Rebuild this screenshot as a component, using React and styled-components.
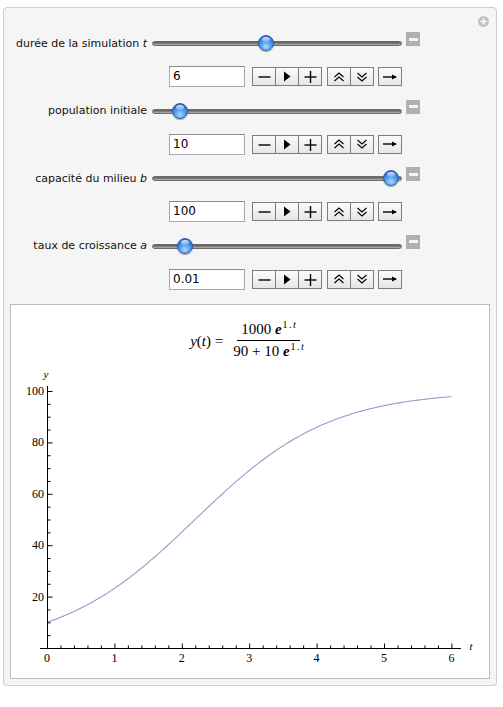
import React from "react";
import styled, { createGlobalStyle } from "styled-components";

const Global = createGlobalStyle`
  html, body { margin: 0; padding: 0; background: #fff; }
  body { font-family: "DejaVu Sans", "Liberation Sans", sans-serif; }
`;

const Panel = styled.div`
  position: relative;
  box-sizing: border-box;
  margin: 7px 0 0 3px;
  width: 494px;
  height: 679px;
  background: #f5f5f5;
  border: 1px solid #cfcfcf;
  border-radius: 4px;
  display: flex;
  flex-direction: column;
  box-shadow: 0 1px 1px rgba(0, 0, 0, 0.06);
`;

const AddButton = styled.div`
  position: absolute;
  top: 8px;
  right: 7px;
  width: 11px;
  height: 11px;
  border-radius: 50%;
  background: #c2c2c2;
  display: flex;
  align-items: center;
  justify-content: center;
`;

const Controls = styled.div`
  display: flex;
  flex-direction: column;
  padding-top: 18px;
`;

const SliderRow = styled.div`
  display: flex;
  align-items: center;
  height: 34px;
`;

const Label = styled.div`
  box-sizing: border-box;
  width: 148px;
  padding-right: 5px;
  text-align: right;
  font-size: 11px;
  color: #111;
  white-space: nowrap;

  i { font-style: italic; }
`;

const Track = styled.div`
  position: relative;
  width: 250px;
  height: 16px;

  &::before {
    content: "";
    position: absolute;
    left: 0;
    right: 0;
    top: 6px;
    height: 5px;
    box-sizing: border-box;
    border-radius: 3px;
    border: 1px solid #6c6c6c;
    background: linear-gradient(#555, #8a8a8a 60%, #b5b5b5);
  }
`;

const Thumb = styled.div`
  position: absolute;
  top: 0;
  width: 16px;
  height: 16px;
  margin-left: -8px;
  box-sizing: border-box;
  border-radius: 50%;
  border: 1px solid #2b5fb0;
  background: radial-gradient(circle at 50% 75%, #a9dcff 0%, #5fa6f2 35%, #2f74d6 70%, #1f56b6 100%);
  box-shadow: 0 1px 1px rgba(0, 0, 0, 0.35);

  &::after {
    content: "";
    position: absolute;
    left: 3px;
    top: 1px;
    width: 8px;
    height: 5px;
    border-radius: 50%;
    background: linear-gradient(rgba(255, 255, 255, 0.85), rgba(255, 255, 255, 0.15));
  }
`;

const Collapse = styled.div`
  align-self: flex-start;
  margin: 6px 0 0 4px;
  width: 14px;
  height: 14px;
  background: #b0b0b0;
  display: flex;
  align-items: center;
  justify-content: center;

  &::after {
    content: "";
    width: 9px;
    height: 3px;
    background: #f4f4f4;
  }
`;

const InputRow = styled.div`
  display: flex;
  align-items: center;
  height: 33.5px;
  padding-left: 165px;
`;

const Field = styled.div`
  box-sizing: border-box;
  width: 76px;
  height: 21px;
  background: #fff;
  border: 1px solid #a9a9a9;
  border-top-color: #8c8c8c;
  font-size: 12px;
  line-height: 19px;
  padding-left: 3px;
  color: #000;
`;

const Group = styled.div`
  display: flex;
  margin-left: ${(p) => p.$gap}px;
  border: 1px solid #7d7d7d;
  height: 19px;
  box-sizing: border-box;
`;

const Btn = styled.div`
  width: ${(p) => p.$w}px;
  height: 100%;
  display: flex;
  align-items: center;
  justify-content: center;
  background: linear-gradient(#fbfbfb, #e6e6e6);
  & + & { border-left: 1px solid #7d7d7d; }
`;

const Pane = styled.div`
  margin: 8px 6px 6px 6px;
  flex: 1;
  background: #fff;
  border: 1px solid #bdbdbd;
  display: flex;
  flex-direction: column;
`;

const Formula = styled.div`
  height: 60px;
  box-sizing: border-box;
  padding: 16px 2px 0 0;
  display: flex;
  justify-content: center;
  align-items: flex-start;
  font-family: "Liberation Serif", "DejaVu Serif", serif;
  font-size: 15px;
  color: #000;

  i { font-style: italic; }
`;

const Lhs = styled.div`
  margin-top: 12px;
  margin-right: 6px;
  white-space: nowrap;
`;

const Frac = styled.div`
  display: flex;
  flex-direction: column;
  align-items: center;
`;

const Num = styled.div`
  padding: 0 4px 2px;
  line-height: 17px;
  border-bottom: 1px solid #000;
  white-space: nowrap;
`;

const Den = styled.div`
  padding: 2px 4px 0;
  line-height: 17px;
  white-space: nowrap;
`;

const E = styled.b`
  font-style: italic;
  font-weight: bold;
`;

const Sup = styled.sup`
  font-size: 10px;
  vertical-align: 6px;
  line-height: 0;
  margin-left: 1px;
  word-spacing: -1px;
`;

const Chart = styled.svg`
  display: block;
  font-family: "Liberation Serif", "DejaVu Serif", serif;
`;

const params = [
  { label: "durée de la simulation", v: "t", value: "6", pos: 0.453 },
  { label: "population initiale", v: "", value: "10", pos: 0.085 },
  { label: "capacité du milieu", v: "b", value: "100", pos: 0.987 },
  { label: "taux de croissance", v: "a", value: "0.01", pos: 0.107 },
];

const Icon = ({ kind }) => {
  const s = { stroke: "#000", strokeWidth: 1.4, fill: "none" };
  if (kind === "minus") return <svg width="13" height="13"><line x1="0.5" y1="7" x2="12.5" y2="7" {...s} /></svg>;
  if (kind === "plus")
    return (
      <svg width="13" height="13">
        <line x1="0.5" y1="7" x2="12.5" y2="7" {...s} />
        <line x1="6.5" y1="1" x2="6.5" y2="13" {...s} />
      </svg>
    );
  if (kind === "play") return <svg width="8" height="11"><path d="M1 0.5 L7.5 5.5 L1 10.5 Z" fill="#000" /></svg>;
  if (kind === "up")
    return (
      <svg width="12" height="12">
        <path d="M1.5 6 L6 2 L10.5 6 M1.5 10 L6 6 L10.5 10" {...s} strokeWidth="1.1" />
      </svg>
    );
  if (kind === "down")
    return (
      <svg width="12" height="12">
        <path d="M1.5 2 L6 6 L10.5 2 M1.5 6 L6 10 L10.5 6" {...s} strokeWidth="1.1" />
      </svg>
    );
  return (
    <svg width="16" height="10">
      <line x1="1" y1="5" x2="14" y2="5" {...s} />
      <path d="M10 2.5 L15 5 L10 7.5 Z" fill="#000" />
    </svg>
  );
};

const X0 = 47;
const Y0 = 648;
const SX = 67.4;
const SY = 2.57;
const px = (t) => X0 + t * SX;
const py = (y) => Y0 - y * SY;

function curvePath() {
  const pts = [];
  for (let i = 0; i <= 240; i++) {
    const t = (i / 240) * 6;
    const y = (100 * Math.exp(t)) / (9 + Math.exp(t));
    pts.push(`${i ? "L" : "M"}${px(t).toFixed(2)} ${py(y).toFixed(2)}`);
  }
  return pts.join(" ");
}

const Plot = () => {
  const xt = [];
  for (let k = 0; k <= 30; k++) {
    const x = px(k / 5);
    const major = k % 5 === 0;
    xt.push(<line key={"x" + k} x1={x} x2={x} y1={Y0} y2={Y0 - (major ? 5 : 3)} stroke="#000" />);
  }
  const yt = [];
  for (let k = 1; k <= 20; k++) {
    const y = py(k * 5);
    const major = k % 4 === 0;
    yt.push(<line key={"y" + k} x1={X0} x2={X0 + (major ? 5 : 3)} y1={y} y2={y} stroke="#000" />);
  }
  return (
    <Chart width="477" height="312">
      <g transform="translate(-11,-365)">
        <path d={curvePath()} fill="none" stroke="#9a98cf" strokeWidth="1.1" />
        <line x1={40} x2={461} y1={Y0 + 0.5} y2={Y0 + 0.5} stroke="#000" />
        <line x1={X0 + 0.5} x2={X0 + 0.5} y1={386} y2={Y0} stroke="#000" />
        <g transform="translate(0.5,0.5)">
          {xt}
          {yt}
        </g>
        {[0, 1, 2, 3, 4, 5, 6].map((t) => (
          <text key={t} x={px(t)} y={662} fontSize="12" textAnchor="middle">
            {t}
          </text>
        ))}
        {[20, 40, 60, 80, 100].map((y) => (
          <text key={y} x={44} y={py(y) + 4} fontSize="12" textAnchor="end">
            {y}
          </text>
        ))}
        <text x={46} y={378} fontSize="11" fontStyle="italic" textAnchor="middle">y</text>
        <text x={471} y={650} fontSize="11" fontStyle="italic" textAnchor="middle">t</text>
      </g>
    </Chart>
  );
};

export default function App() {
  return (
    <>
      <Global />
      <Panel>
        <AddButton>
          <svg width="7" height="7">
            <path d="M3.5 0.5 V6.5 M0.5 3.5 H6.5" stroke="#fff" strokeWidth="1.6" />
          </svg>
        </AddButton>
        <Controls>
          {params.map((p) => (
            <React.Fragment key={p.label}>
              <SliderRow>
                <Label>
                  {p.label}
                  {p.v && <> <i>{p.v}</i></>}
                </Label>
                <Track>
                  <Thumb style={{ left: `${8 + p.pos * 234}px` }} />
                </Track>
                <Collapse />
              </SliderRow>
              <InputRow>
                <Field>{p.value}</Field>
                <Group $gap={7}>
                  <Btn $w={22}><Icon kind="minus" /></Btn>
                  <Btn $w={22}><Icon kind="play" /></Btn>
                  <Btn $w={22}><Icon kind="plus" /></Btn>
                </Group>
                <Group $gap={5}>
                  <Btn $w={22}><Icon kind="up" /></Btn>
                  <Btn $w={22}><Icon kind="down" /></Btn>
                </Group>
                <Group $gap={4}>
                  <Btn $w={22}><Icon kind="arrow" /></Btn>
                </Group>
              </InputRow>
            </React.Fragment>
          ))}
        </Controls>
        <Pane>
          <Formula>
            <Lhs>
              <i>y</i>(<i>t</i>) =
            </Lhs>
            <Frac>
              <Num>
                1000 <E>e</E>
                <Sup>1 . <i>t</i></Sup>
              </Num>
              <Den>
                90 + 10 <E>e</E>
                <Sup>1 . <i>t</i></Sup>
              </Den>
            </Frac>
          </Formula>
          <Plot />
        </Pane>
      </Panel>
    </>
  );
}
